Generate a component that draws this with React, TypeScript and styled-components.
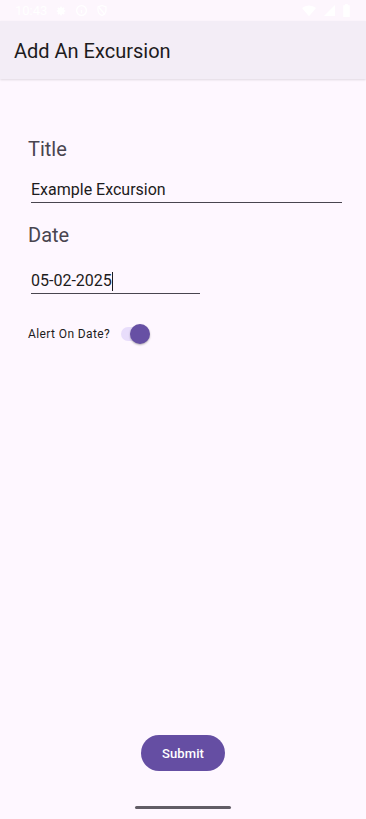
import styled, { createGlobalStyle } from 'styled-components';

const GlobalStyle = createGlobalStyle`
    html, body {
        margin: 0;
        padding: 0;
        background: #fef7ff;
    }
    body {
        font-family: Roboto, "Liberation Sans", sans-serif;
    }
`;

const Screen = styled.div`
    width: 366px;
    height: 819px;
    display: flex;
    flex-direction: column;
    background: #fef7ff;
    overflow: hidden;
`;

const StatusBar = styled.div`
    height: 21px;
    flex-shrink: 0;
    display: flex;
    align-items: center;
    justify-content: space-between;
    padding: 0 16px 0 15px;
    color: #ffffff;
    font-size: 13px;
    background: #fdf6fd;
`;

const StatusGroup = styled.div`
    display: flex;
    align-items: center;
    gap: 8px;
`;

const AppBar = styled.header`
    height: 58px;
    flex-shrink: 0;
    display: flex;
    align-items: center;
    padding: 0 14px;
    background: #f3edf6;
    box-shadow: 0 1px 2px rgba(0, 0, 0, 0.12);
`;

const AppTitle = styled.h1`
    margin: 2px 0 0;
    font-size: 20px;
    font-weight: 400;
    color: #1d1b20;
`;

const Form = styled.main`
    flex: 1;
    display: flex;
    flex-direction: column;
    padding: 58px 24px 0 28px;
`;

const Label = styled.div`
    font-size: 20px;
    color: #49454f;
    line-height: 24px;
`;

const Field = styled.div<{ $width: number; $gap: number }>`
    width: ${props => props.$width}px;
    margin: ${props => props.$gap}px 0 0 3px;
    border-bottom: 1.5px solid #49454f;
    font-size: 16px;
    color: #1d1b20;
    line-height: 20px;
    padding-bottom: 2px;
    display: flex;
    align-items: center;
`;

const Caret = styled.span`
    display: inline-block;
    width: 1.5px;
    height: 19px;
    background: #1d1b20;
`;

const DateLabel = styled(Label)`
    margin-top: 20px;
`;

const AlertRow = styled.div`
    margin-top: 33px;
    display: flex;
    align-items: center;
    gap: 11px;
    font-size: 12px;
    letter-spacing: 0.4px;
    color: #1d1b20;
`;

const Track = styled.div`
    position: relative;
    width: 26px;
    height: 14px;
    border-radius: 7px;
    background: #e8ddfb;
`;

const Thumb = styled.div`
    position: absolute;
    left: 9px;
    top: -3px;
    width: 20px;
    height: 20px;
    border-radius: 50%;
    background: #6750a4;
    box-shadow: 0 1px 2px rgba(0, 0, 0, 0.3);
`;

const Footer = styled.div`
    flex-shrink: 0;
    display: flex;
    flex-direction: column;
    align-items: center;
    padding-bottom: 10px;
`;

const SubmitButton = styled.button`
    width: 84px;
    height: 36px;
    border: 0;
    border-radius: 18px;
    background: #654ea3;
    color: #ffffff;
    font-family: Roboto, "Liberation Sans", sans-serif;
    font-size: 13px;
    font-weight: 500;
    letter-spacing: 0.1px;
`;

const Handle = styled.div`
    margin-top: 35px;
    width: 96px;
    height: 3px;
    border-radius: 2px;
    background: #625d66;
`;

function Excursion() {
    return (
        <Screen>
            <GlobalStyle />
            <StatusBar>
                <StatusGroup>
                    <span>10:43</span>
                    <svg width="12" height="12" viewBox="0 0 24 24" fill="#fff">
                        <path d="M12 8a4 4 0 100 8 4 4 0 000-8zm9 5.2v-2.4l-2.6-.6-.6-1.5 1.4-2.3-1.7-1.7-2.3 1.4-1.5-.6L13.2 3h-2.4l-.6 2.6-1.5.6-2.3-1.4-1.7 1.7 1.4 2.3-.6 1.5L3 10.8v2.4l2.6.6.6 1.5-1.4 2.3 1.7 1.7 2.3-1.4 1.5.6.6 2.5h2.4l.6-2.6 1.5-.6 2.3 1.4 1.7-1.7-1.4-2.3.6-1.5z" />
                    </svg>
                    <svg width="13" height="13" viewBox="0 0 24 24" fill="none" stroke="#fff" strokeWidth="2.4">
                        <circle cx="12" cy="12" r="9" />
                        <path d="M12 11v6M12 7v1" />
                    </svg>
                    <svg width="12" height="13" viewBox="0 0 24 24" fill="none" stroke="#fff" strokeWidth="2.4">
                        <path d="M12 2l8 3v6c0 5-3.5 9-8 11-4.5-2-8-6-8-11V5z" />
                        <path d="M6 6l12 14" />
                    </svg>
                </StatusGroup>
                <StatusGroup>
                    <svg width="14" height="12" viewBox="0 0 24 20" fill="#fff">
                        <path d="M12 19L0 5C7-1 17-1 24 5z" />
                    </svg>
                    <svg width="11" height="11" viewBox="0 0 20 20" fill="#fff">
                        <path d="M20 0v20H0z" />
                    </svg>
                    <svg width="7" height="13" viewBox="0 0 10 20" fill="#fff">
                        <path d="M3 0h4v2h3v18H0V2h3z" />
                    </svg>
                </StatusGroup>
            </StatusBar>
            <AppBar>
                <AppTitle>Add An Excursion</AppTitle>
            </AppBar>
            <Form>
                <Label>Title</Label>
                <Field $width={311} $gap={19}>Example Excursion</Field>
                <DateLabel>Date</DateLabel>
                <Field $width={169} $gap={24}>05-02-2025<Caret /></Field>
                <AlertRow>
                    <span>Alert On Date?</span>
                    <Track>
                        <Thumb />
                    </Track>
                </AlertRow>
            </Form>
            <Footer>
                <SubmitButton>Submit</SubmitButton>
                <Handle />
            </Footer>
        </Screen>
    );
}
export default Excursion;
